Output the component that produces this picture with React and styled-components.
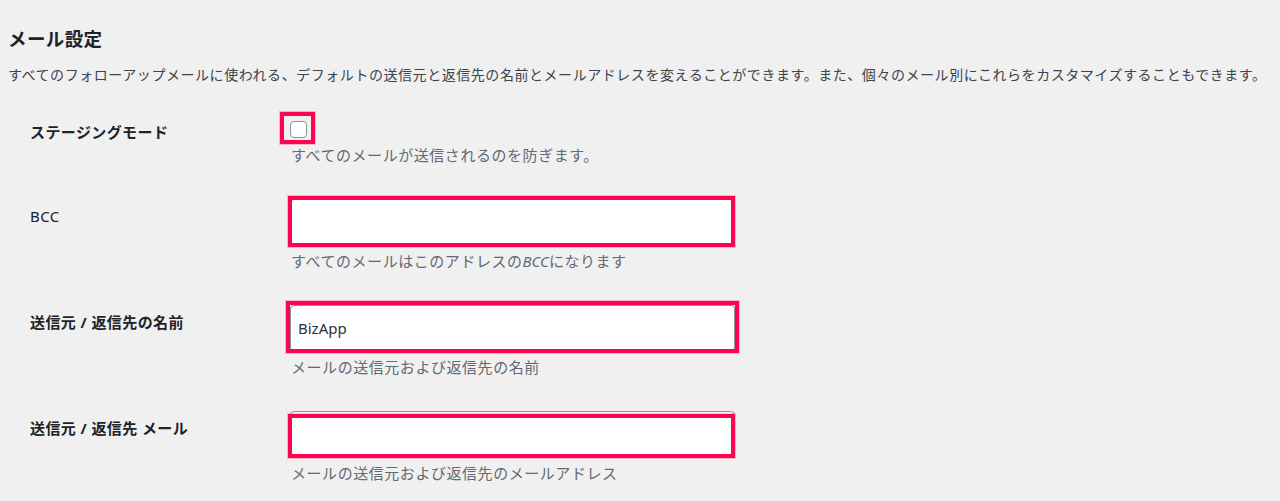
import React from "react";
import styled, { createGlobalStyle } from "styled-components";

const GlobalStyle = createGlobalStyle`
  html, body { margin: 0; padding: 0; background: #f0f0f1; }
  body {
    font-family: "Noto Sans", "Noto Sans CJK JP", sans-serif;
    color: #3c434a;
  }
  * { box-sizing: border-box; }
`;

const Page = styled.div`
  min-height: 501px;
  padding: 27px 0 0 8px;
`;

const Title = styled.h2`
  margin: 0;
  font-size: 18.5px;
  line-height: 24px;
  font-weight: 700;
  color: #1d2327;
  letter-spacing: 0.4px;
`;

const Intro = styled.p`
  margin: 14px 0 0;
  font-size: 14px;
  line-height: 20px;
  letter-spacing: 0.55px;
  color: #3c434a;
  white-space: nowrap;
`;

const Form = styled.div`
  margin-top: 19px;
`;

const Row = styled.div`
  display: flex;
  padding: 16px 0 18px 22px;
`;

const Label = styled.label`
  flex: none;
  width: 260px;
  margin-top: ${(p) => p.$offset}px;
  font-size: 15px;
  line-height: 20px;
  font-weight: ${(p) => (p.$latin ? 400 : 700)};
  color: #1d2327;
  letter-spacing: 0.4px;
`;

const Field = styled.div`
  display: flex;
  flex-direction: column;
  align-items: flex-start;
`;

const Marked = styled.div`
  position: relative;
  display: inline-flex;
  margin-top: ${(p) => p.$mt || 0}px;
  &::after {
    content: "";
    position: absolute;
    top: ${(p) => p.$t}px;
    left: ${(p) => p.$l}px;
    right: ${(p) => p.$r}px;
    bottom: ${(p) => p.$b}px;
    border: 4px solid #fc0450;
    box-shadow: 0 0 0 1px rgba(252, 4, 80, 0.25);
    pointer-events: none;
  }
`;

const Checkbox = styled.input.attrs({ type: "checkbox" })`
  appearance: none;
  margin: 0;
  width: 17px;
  height: 17px;
  border: 1px solid #8c8f94;
  border-radius: 4px;
  background: #fff;
`;

const TextInput = styled.input.attrs({ type: "text" })`
  width: 445px;
  height: 46px;
  margin: 0;
  border: 1px solid #8c8f94;
  border-radius: 4px;
  background: #fff;
  padding: 0 7px;
  font-family: "Noto Sans", "Noto Sans CJK JP", sans-serif;
  font-size: 15px;
  color: #2c3338;
  outline: none;
`;

const Hint = styled.p`
  margin: ${(p) => p.$mt}px 0 0;
  padding-left: 1px;
  font-size: 15px;
  line-height: 20px;
  letter-spacing: 0.55px;
  color: #646970;
  white-space: nowrap;
  em { font-style: italic; letter-spacing: 0; }
`;

const inputRows = [
  {
    label: "BCC",
    latin: true,
    value: "",
    mark: { t: -3, l: -2, r: 0, b: -2 },
    hint: (
      <>
        すべてのメールはこのアドレスの<em>BCC</em>になります
      </>
    ),
  },
  {
    label: "送信元 / 返信先の名前",
    value: "BizApp",
    mark: { t: -4, l: -4, r: -4, b: -2 },
    hint: "メールの送信元および返信先の名前",
  },
  {
    label: "送信元 / 返信先 メール",
    value: "",
    mark: { t: 3, l: -2, r: 0, b: -1 },
    hint: "メールの送信元および返信先のメールアドレス",
  },
];

export default function App() {
  return (
    <>
      <GlobalStyle />
      <Page>
        <Title>メール設定</Title>
        <Intro>
          すべてのフォローアップメールに使われる、デフォルトの送信元と返信先の名前とメールアドレスを変えることができます。また、個々のメール別にこれらをカスタマイズすることもできます。
        </Intro>
        <Form>
          <Row>
            <Label $offset={2}>ステージングモード</Label>
            <Field>
              <Marked $mt={1} $t={-9} $l={-10} $r={-8} $b={-6}>
                <Checkbox />
              </Marked>
              <Hint $mt={7}>すべてのメールが送信されるのを防ぎます。</Hint>
            </Field>
          </Row>
          {inputRows.map((r) => (
            <Row key={r.label}>
              <Label $offset={7} $latin={r.latin}>
                {r.label}
              </Label>
              <Field>
                <Marked $t={r.mark.t} $l={r.mark.l} $r={r.mark.r} $b={r.mark.b}>
                  <TextInput defaultValue={r.value} />
                </Marked>
                <Hint $mt={6}>{r.hint}</Hint>
              </Field>
            </Row>
          ))}
        </Form>
      </Page>
    </>
  );
}
